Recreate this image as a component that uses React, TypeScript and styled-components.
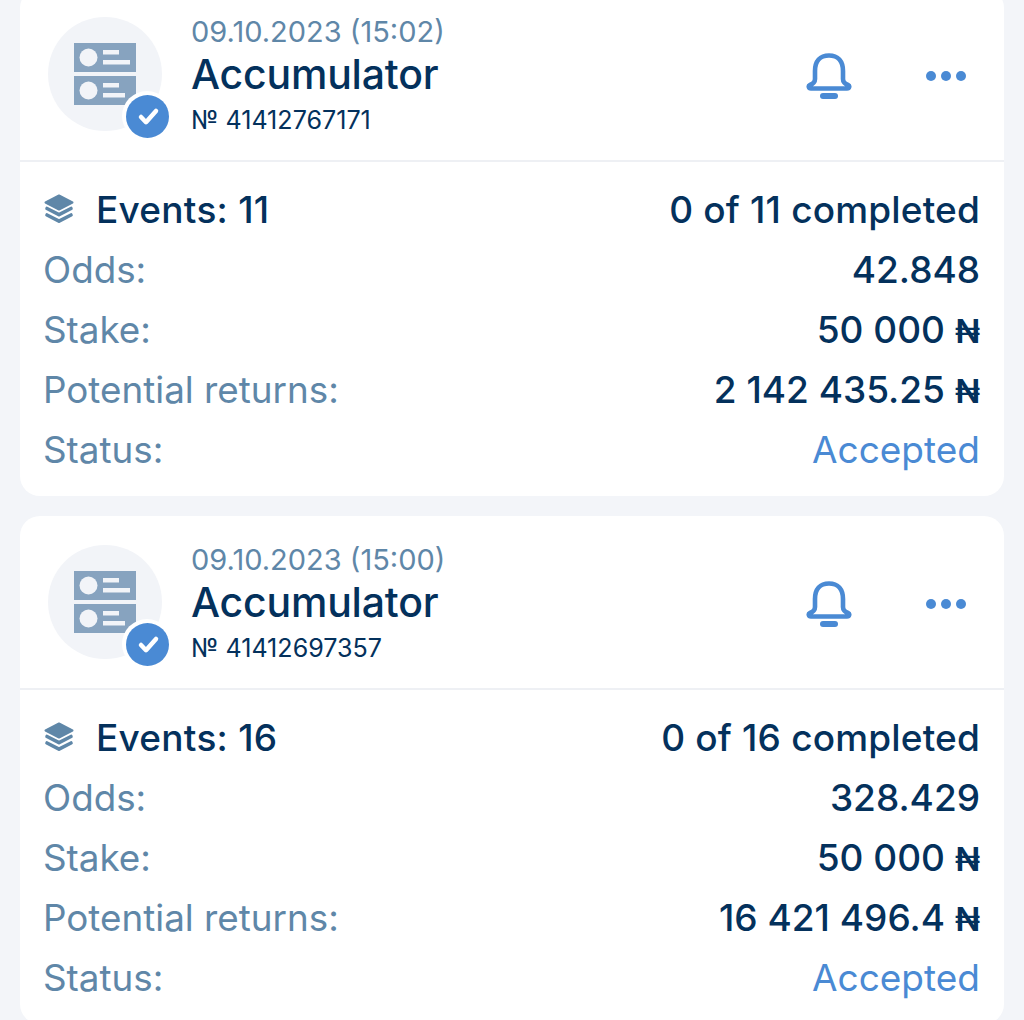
import React from "react";
import styled, { createGlobalStyle } from "styled-components";

const Global = createGlobalStyle`
  html, body { margin: 0; padding: 0; background: #f3f5f9; }
  body { font-family: Inter, "Noto Sans", sans-serif; overflow: hidden; }
`;

const Page = styled.div`
  width: 1024px;
  height: 1020px;
  overflow: hidden;
  box-sizing: border-box;
  padding: 0 20px;
  background: #f3f5f9;
`;
const List = styled.div`
  display: flex;
  flex-direction: column;
  gap: 20px;
  margin-top: -12px;
`;
const Card = styled.section`
  background: #fff;
  border-radius: 20px;
  flex: none;
  height: 508px;
  display: flex;
  flex-direction: column;
`;
const Header = styled.header`
  height: 174px;
  box-sizing: border-box;
  border-bottom: 2px solid #eef0f4;
  display: flex;
  align-items: flex-start;
  padding: 29px 20px 0 28px;
`;
const Avatar = styled.div`
  position: relative;
  width: 114px;
  height: 114px;
  border-radius: 50%;
  background: #f2f4f8;
  flex: none;
  display: flex;
  align-items: center;
  justify-content: center;
`;
const Badge = styled.div`
  position: absolute;
  right: -10px;
  bottom: -10px;
  width: 50px;
  height: 50px;
  border-radius: 50%;
  background: #fff;
  display: flex;
  align-items: center;
  justify-content: center;
`;
const Titles = styled.div`
  margin-left: 29px;
  flex: 1;
  display: flex;
  flex-direction: column;
`;
const DateText = styled.div`
  font-size: 29px;
  line-height: 32px;
  margin-top: -1px;
  color: #5f87a8;
`;
const Title = styled.div`
  font-size: 41px;
  line-height: 50px;
  margin-top: 1px;
  font-weight: 500;
  color: #04315c;
  letter-spacing: -0.2px;
`;
const Num = styled.div`
  font-size: 25.1px;
  line-height: 28px;
  margin-top: 7px;
  color: #04315c;
`;
const Actions = styled.div`
  display: flex;
  align-items: center;
  gap: 74px;
  margin-top: 35px;
  margin-right: 18px;
`;
const Body = styled.div`
  padding: 17px 24px 0 23px;
  display: flex;
  flex-direction: column;
`;
const Row = styled.div`
  height: 60px;
  display: flex;
  align-items: center;
  justify-content: space-between;
  font-size: 37px;
  white-space: nowrap;
`;
const Label = styled.span`
  color: #5f87a8;
  font-size: 36.8px;
`;
const EventsLabel = styled.span`
  display: flex;
  align-items: center;
  gap: 22px;
  color: #04315c;
  font-weight: 500;
  letter-spacing: 0.25px;
`;
const Value = styled.span<{ $accent?: boolean }>`
  color: ${(p) => (p.$accent ? "#4a8ad4" : "#04315c")};
  font-weight: ${(p) => (p.$accent ? 400 : 500)};
`;
const Progress = styled(Value)`
  letter-spacing: 0.17px;
`;
const Currency = styled.span`
  font-size: 33px;
  font-weight: 600;
`;

const CouponIcon = () => (
  <svg width="62" height="62" viewBox="0 0 62 62">
    <rect x="0" y="0" width="62" height="29" fill="#87a3bf" />
    <circle cx="14.5" cy="14.5" r="9" fill="#f2f4f8" />
    <rect x="29" y="7" width="16" height="4.5" fill="#f2f4f8" />
    <rect x="29" y="17" width="27" height="4.5" fill="#f2f4f8" />
    <rect x="0" y="33" width="62" height="29" fill="#87a3bf" />
    <circle cx="14.5" cy="47.5" r="9" fill="#f2f4f8" />
    <rect x="29" y="40" width="16" height="4.5" fill="#f2f4f8" />
    <rect x="29" y="50" width="22" height="4.5" fill="#f2f4f8" />
  </svg>
);
const CheckBadge = () => (
  <svg width="43" height="43" viewBox="0 0 43 43">
    <circle cx="21.5" cy="21.5" r="21.5" fill="#4a8ad4" />
    <path d="M15 22l5 5.2L30 16" fill="none" stroke="#fff" strokeWidth="4.5" strokeLinecap="round" strokeLinejoin="round" />
  </svg>
);
const Bell = () => (
  <svg width="46" height="48" viewBox="0 0 46 48">
    <path
      d="M9 27V19C9 9 14 3.5 23 3.5S37 9 37 19V27C37 30 39.5 32 42 33C44 33.8 43.5 36.5 41 36.5H5C2.5 36.5 2 33.8 4 33C6.5 32 9 30 9 27Z"
      fill="none"
      stroke="#4a8ad4"
      strokeWidth="4.6"
      strokeLinejoin="round"
    />
    <path d="M17 44h12" stroke="#4a8ad4" strokeWidth="6" strokeLinecap="round" />
  </svg>
);
const Dots = () => (
  <svg width="40" height="10" viewBox="0 0 40 10">
    <circle cx="5" cy="5" r="5" fill="#4a8ad4" />
    <circle cx="20" cy="5" r="5" fill="#4a8ad4" />
    <circle cx="35" cy="5" r="5" fill="#4a8ad4" />
  </svg>
);
const Layers = () => (
  <svg width="31" height="30" viewBox="-1 0 31 30">
    <path d="M15 1.5L28.5 8.5 15 15.5 1.5 8.5Z" fill="#5f87a8" stroke="#5f87a8" strokeWidth="2" strokeLinejoin="round" />
    <path d="M3 14.5l12 6.2L27 14.5M3 21l12 6.2L27 21" fill="none" stroke="#5f87a8" strokeWidth="3.6" strokeLinecap="round" strokeLinejoin="round" />
  </svg>
);

const bets = [
  { date: "09.10.2023 (15:02)", num: "41412767171", events: 11, odds: "42.848", ret: "2 142 435.25" },
  { date: "09.10.2023 (15:00)", num: "41412697357", events: 16, odds: "328.429", ret: "16 421 496.4" },
];

export default function App() {
  return (
    <Page>
      <Global />
      <List>
        {bets.map((b) => (
          <Card key={b.num}>
            <Header>
              <Avatar>
                <CouponIcon />
                <Badge>
                  <CheckBadge />
                </Badge>
              </Avatar>
              <Titles>
                <DateText>{b.date}</DateText>
                <Title>Accumulator</Title>
                <Num>№ {b.num}</Num>
              </Titles>
              <Actions>
                <Bell />
                <Dots />
              </Actions>
            </Header>
            <Body>
              <Row>
                <EventsLabel>
                  <Layers />
                  Events: {b.events}
                </EventsLabel>
                <Progress>0 of {b.events} completed</Progress>
              </Row>
              <Row>
                <Label>Odds:</Label>
                <Value>{b.odds}</Value>
              </Row>
              <Row>
                <Label>Stake:</Label>
                <Value>50 000 <Currency>₦</Currency></Value>
              </Row>
              <Row>
                <Label>Potential returns:</Label>
                <Value>{b.ret} <Currency>₦</Currency></Value>
              </Row>
              <Row>
                <Label>Status:</Label>
                <Value $accent>Accepted</Value>
              </Row>
            </Body>
          </Card>
        ))}
      </List>
    </Page>
  );
}
